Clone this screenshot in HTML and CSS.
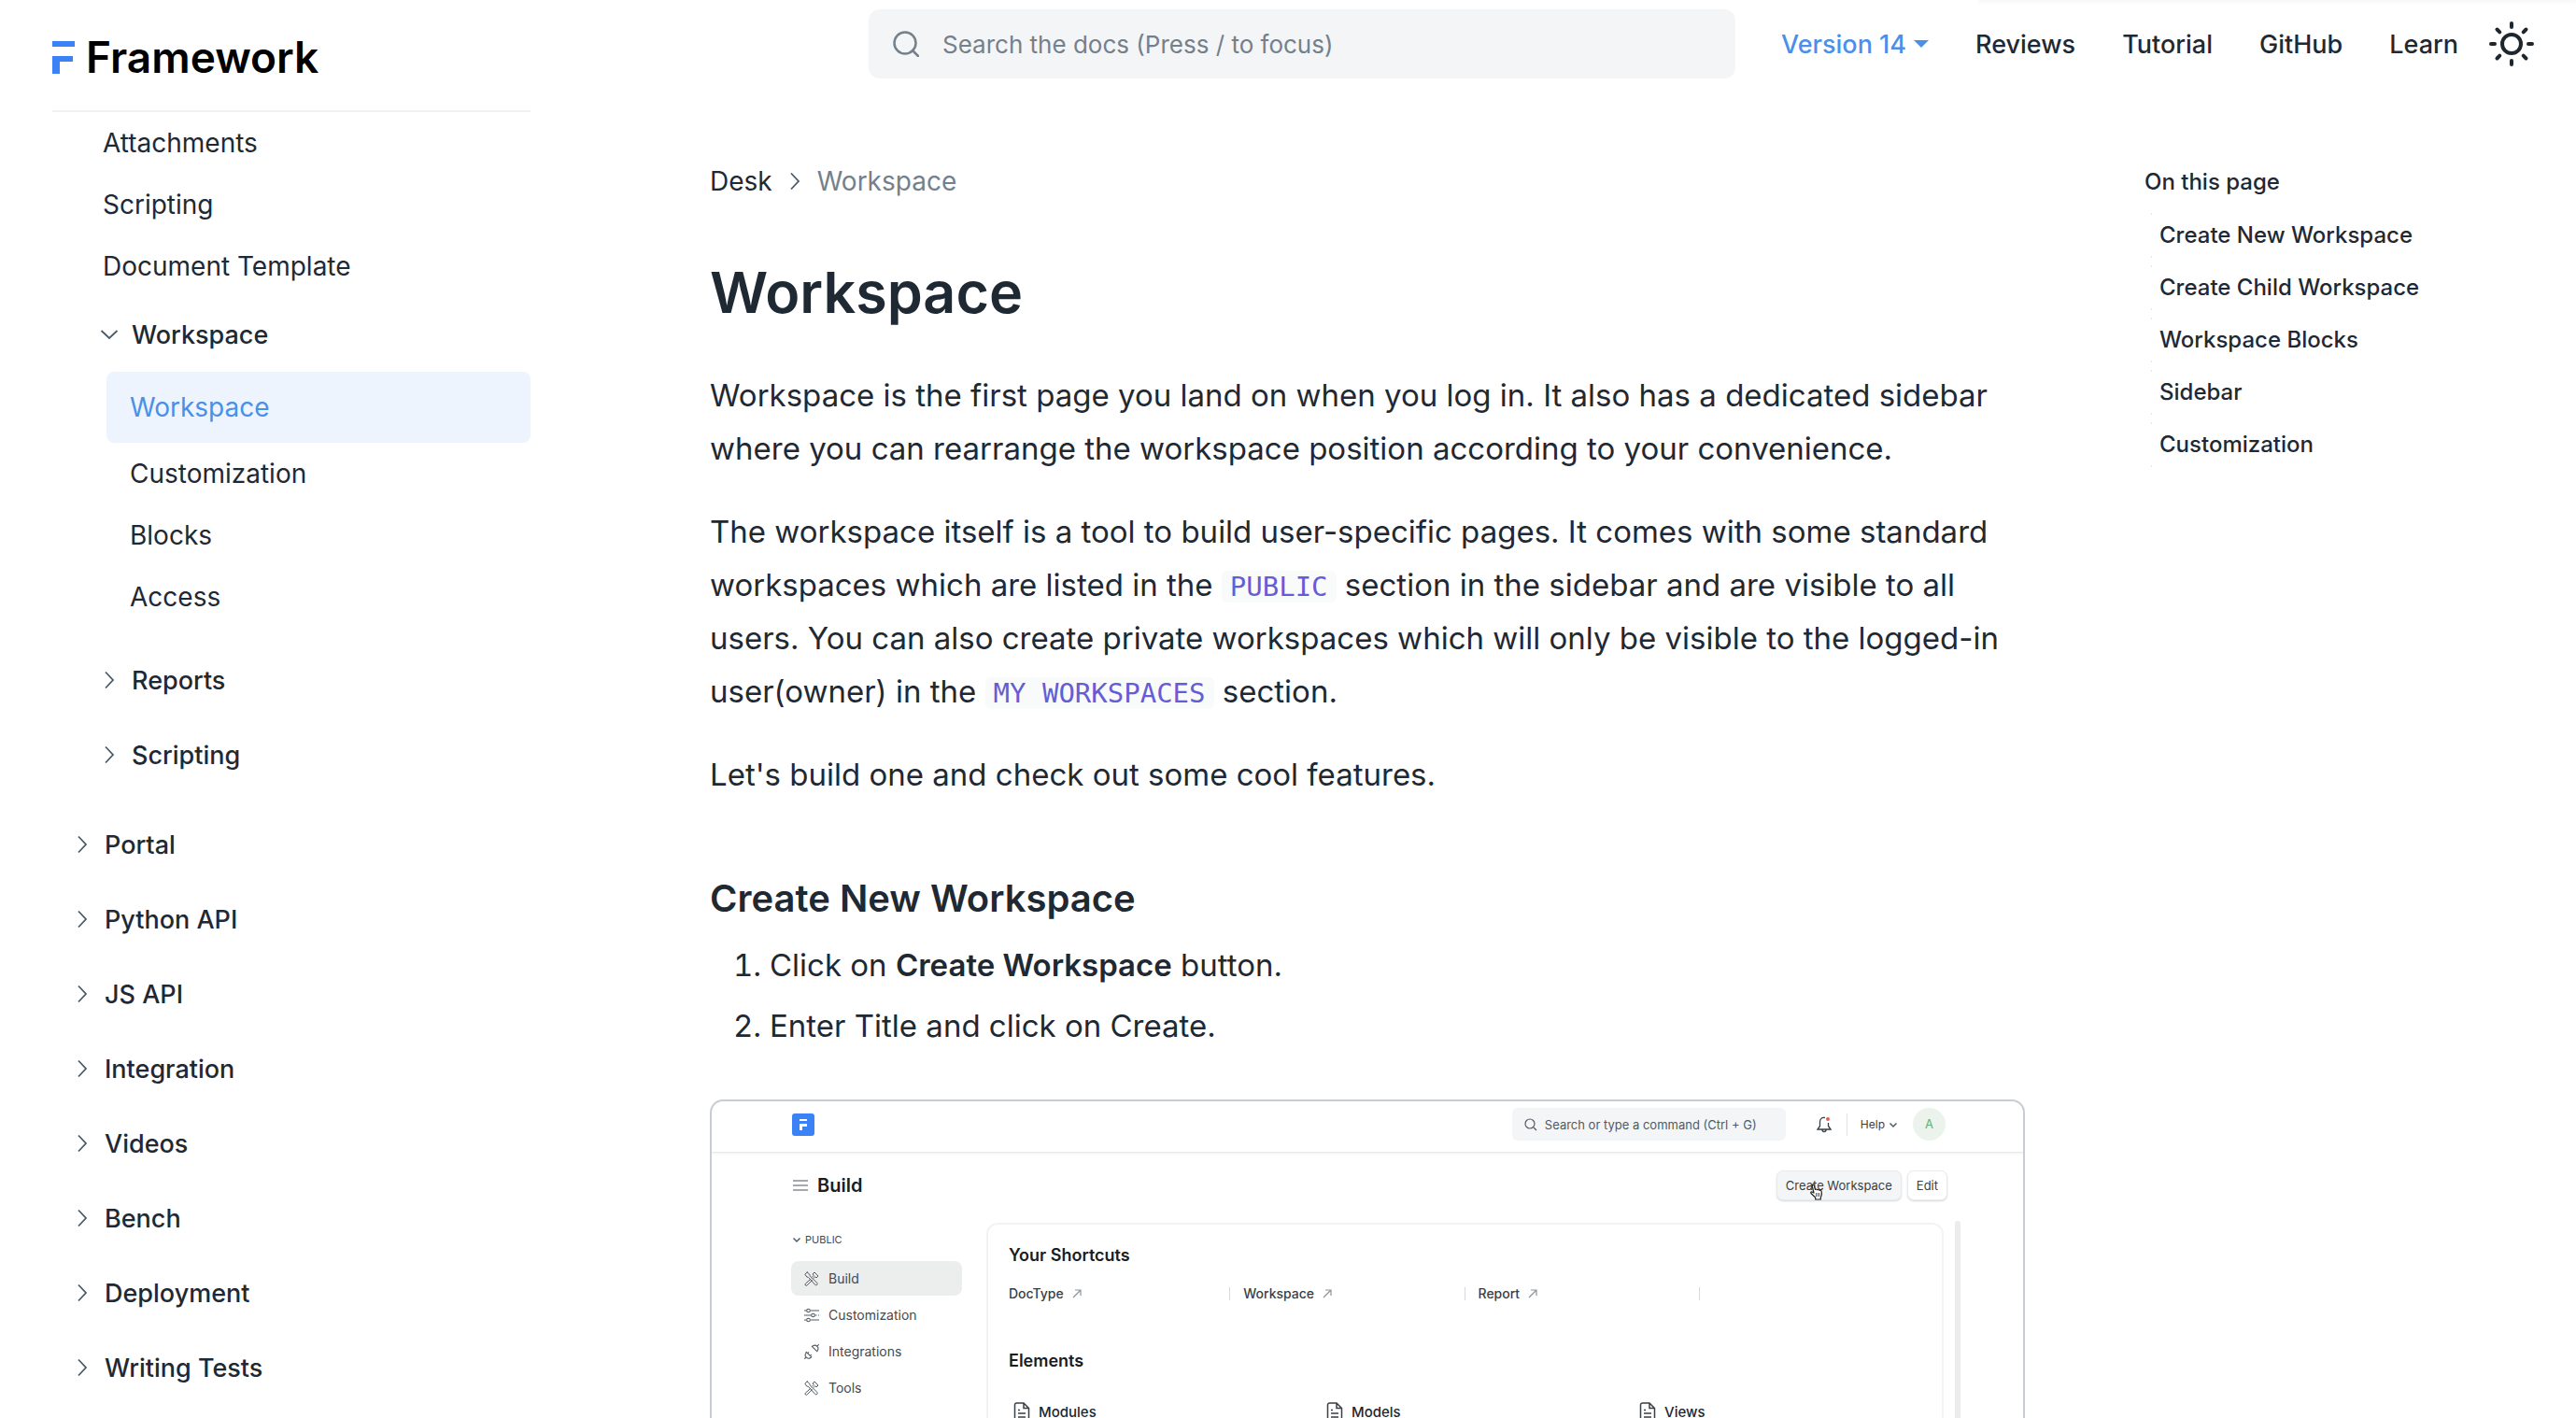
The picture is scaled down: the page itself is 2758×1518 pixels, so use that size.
FILE: index.html
```
<!DOCTYPE html>
<html lang="en">
<head>
<meta charset="utf-8">
<meta name="viewport" content="width=device-width, initial-scale=1">
<title>Workspace - Framework</title>
<link rel="stylesheet" href="styles.css">
</head>
<body>
<svg class="sprite" aria-hidden="true">
  <symbol id="chevron-right" viewBox="0 0 24 24"><path d="M8 3.500l8 8.500-8 8.500" fill="none" stroke="#4c5a67" stroke-width="1.800"/></symbol>
  <symbol id="chevron-down" viewBox="0 0 24 24"><path d="M3.500 8l8.500 8 8.500-8" fill="none" stroke="#4c5a67" stroke-width="1.800"/></symbol>
  <symbol id="small-down" viewBox="0 0 10 10"><path d="M1.500 3.500L5 7l3.500-3.500" fill="none" stroke="#525a61" stroke-width="1.500"/></symbol>
  <symbol id="tools" viewBox="0 0 16 16"><g fill="none" stroke="#525a61" stroke-width="1" stroke-linejoin="round" stroke-linecap="round"><path d="M3.200 1l2.600 2.200.3 1.600 7.800 7.600a1.500 1.500 0 0 1-2.100 2.100L4.500 6.400 2.800 6 .8 3.200 3.200 1z"/><path d="M8.700 6L10.300 4.400 9 3l2-2 4 4-2 2-1.300-1.300L10 7.300M7 8.200l-5.600 5a1.200 1.200 0 0 0 1.700 1.800L8.500 9.600"/></g></symbol>
  <symbol id="arrow-out" viewBox="0 0 10 10"><path d="M1 9l8-8M3 1h6v6" fill="none" stroke="#8d959c" stroke-width="1.200"/></symbol>
  <symbol id="file" viewBox="0 0 18 22"><path d="M1.500 3a2 2 0 0 1 2-2H11l5.500 5.500V19a2 2 0 0 1-2 2h-11a2 2 0 0 1-2-2zM11 1v5.500h5.500M5 8.500h2M5 12h8M5 16h8" fill="none" stroke="#383f45" stroke-width="1.500"/></symbol>
</svg>
<div class="page">
  <aside class="sidebar">
    <a class="brand" href="#">
      <svg class="brand-mark" viewBox="0 0 24 35" aria-hidden="true"><path d="M0 0h24v6H0zM0 16h22v6H8v13H0z" fill="#3b82f6"/></svg>
      <span>Framework</span>
    </a>
    <nav class="tree" aria-label="Documentation">
      <a class="leaf" href="#">Attachments</a>
      <a class="leaf" href="#">Scripting</a>
      <a class="leaf" href="#">Document Template</a>
      <button class="group nested" type="button" aria-expanded="true"><svg class="chevron"><use href="#chevron-down"/></svg>Workspace</button>
      <div class="subtree">
        <a class="leaf deep active" href="#">Workspace</a>
        <a class="leaf deep" href="#">Customization</a>
        <a class="leaf deep" href="#">Blocks</a>
        <a class="leaf deep" href="#">Access</a>
      </div>
      <div class="subtree">
        <button class="group nested" type="button"><svg class="chevron"><use href="#chevron-right"/></svg>Reports</button>
        <button class="group nested" type="button"><svg class="chevron"><use href="#chevron-right"/></svg>Scripting</button>
      </div>
      <button class="group" type="button"><svg class="chevron"><use href="#chevron-right"/></svg>Portal</button>
      <button class="group" type="button"><svg class="chevron"><use href="#chevron-right"/></svg>Python API</button>
      <button class="group" type="button"><svg class="chevron"><use href="#chevron-right"/></svg>JS API</button>
      <button class="group" type="button"><svg class="chevron"><use href="#chevron-right"/></svg>Integration</button>
      <button class="group" type="button"><svg class="chevron"><use href="#chevron-right"/></svg>Videos</button>
      <button class="group" type="button"><svg class="chevron"><use href="#chevron-right"/></svg>Bench</button>
      <button class="group" type="button"><svg class="chevron"><use href="#chevron-right"/></svg>Deployment</button>
      <button class="group" type="button"><svg class="chevron"><use href="#chevron-right"/></svg>Writing Tests</button>
    </nav>
  </aside>

  <header class="topbar">
    <label class="search">
      <svg class="search-icon" viewBox="0 0 28 28" aria-hidden="true"><circle cx="13" cy="13" r="11.500"/><path d="M21 21l6 6"/></svg>
      <input type="search" placeholder="Search the docs (Press / to focus)" aria-label="Search the docs">
    </label>
    <nav class="links" aria-label="Main">
      <button class="version" type="button">Version 14<svg class="caret" viewBox="0 0 16 8" aria-hidden="true"><path d="M0 0h16L8 8z"/></svg></button>
      <a href="#">Reviews</a>
      <a href="#">Tutorial</a>
      <a href="#">GitHub</a>
      <a href="#">Learn</a>
    </nav>
    <button class="theme" type="button" aria-label="Switch theme">
      <svg viewBox="0 0 48 48" fill="none" stroke="#1f272e" stroke-width="4" stroke-linecap="round"><circle cx="24" cy="24" r="10"/><path d="M24 2v4M24 42v4M2 24h4M42 24h4M8.500 8.500l2.800 2.800M36.700 36.700l2.800 2.800M8.500 39.500l2.800-2.800M36.700 11.300l2.800-2.800"/></svg>
    </button>
  </header>

  <main class="content">
    <nav class="breadcrumb" aria-label="Breadcrumb"><a href="#">Desk</a><svg class="chevron"><use href="#chevron-right"/></svg><span>Workspace</span></nav>
    <h1>Workspace</h1>
    <p>Workspace is the first page you land on when you log in. It also has a dedicated sidebar where you can rearrange the workspace position according to your convenience.</p>
    <p>The workspace itself is a tool to build user-specific pages. It comes with some standard workspaces which are listed in the <code>PUBLIC</code> section in the sidebar and are visible to all users. You can also create private workspaces which will only be visible to the logged-in user(owner) in the <code>MY WORKSPACES</code> section.</p>
    <p>Let's build one and check out some cool features.</p>
    <h2>Create New Workspace</h2>
    <ol>
      <li>Click on <strong>Create Workspace</strong> button.</li>
      <li>Enter Title and click on Create.</li>
    </ol>

    <figure class="demo">
      <div class="demo-nav">
        <svg class="demo-logo" viewBox="0 0 24 24" aria-hidden="true"><rect width="24" height="24" rx="3" fill="#3b82f6"/><path d="M8 6h8v2H8zM8 11h8v3h-5v4H8z" fill="#fff"/></svg>
        <label class="demo-search">
          <svg viewBox="0 0 14 14" aria-hidden="true"><circle cx="6" cy="6" r="5"/><path d="M10 10l3 3"/></svg>
          <input type="search" placeholder="Search or type a command (Ctrl + G)" aria-label="Search or type a command">
        </label>
        <svg class="demo-bell" viewBox="0 0 16 18" aria-hidden="true"><path d="M9 1.500C5.500.8 3.500 3 3.500 6v4.500L1 14h14l-2.500-3.500V7M6 14.500a2 2 0 0 0 4 0" fill="none" stroke="#383f45" stroke-width="1.300"/><circle cx="12" cy="3" r="2" fill="#e0605c"/></svg>
        <button class="demo-help" type="button">Help<svg><use href="#small-down"/></svg></button>
        <span class="demo-avatar">A</span>
      </div>
      <div class="demo-title">
        <svg viewBox="0 0 16 14" aria-hidden="true"><path d="M0 2h16M0 7h16M0 12h16" stroke="#a3a9ae" stroke-width="2"/></svg>
        <strong>Build</strong>
        <button class="demo-button pressed" type="button">Create Workspace<svg class="demo-cursor" viewBox="0 0 16 18" aria-hidden="true"><path d="M5 10L3.200 2.500c-.3-1.600 1.600-2 2-.6L6.500 6.500c.7-.8 1.900-.6 2.200.3.800-.6 1.800-.3 2.200.5.900-.4 2 0 2.200 1 .8 3.200.4 4.700-.8 6.700v2H6.700v-2L2 10.500c-.8-1.300.8-2.200 1.600-1.300z" fill="#fff" stroke="#222" stroke-width="1.200" stroke-linejoin="round"/><path d="M7.500 10v4M9.300 10v4M11 10v4" stroke="#222" stroke-width=".7"/></svg></button>
        <button class="demo-button" type="button">Edit</button>
      </div>
      <div class="demo-body">
        <nav class="demo-side" aria-label="Workspaces">
          <div class="demo-section"><svg><use href="#small-down"/></svg>PUBLIC</div>
          <a class="selected" href="#"><svg><use href="#tools"/></svg>Build</a>
          <a href="#"><svg viewBox="0 0 16 16"><g fill="none" stroke="#525a61" stroke-width="1.100"><path d="M0 3h2.500M7 3h9M0 8h7.500M11.500 8h2M15 8h1M0 13h2.500M7 13h9"/><circle cx="4.500" cy="3" r="1.800"/><circle cx="9.500" cy="8" r="1.800"/><circle cx="4.500" cy="13" r="1.800"/></g></svg>Customization</a>
          <a href="#"><svg viewBox="0 0 16 16"><g fill="none" stroke="#525a61" stroke-width="1.100" stroke-linejoin="round"><path d="M2.300 8.300l5.400 5.400-1 .8c-1.300 1-3.200.8-4.400-.3s-1.400-3.200-.5-4.500zM.3 15.700l1.800-1.700M3.800 9.600L5 8.400M6.500 12.300l1.200-1.200M8.300 2.300l5.400 5.400.6-1c1-1.500.7-3.300-.4-4.400s-3-1.500-4.400-.5zM13.900 2.100L15.700.3"/></g></svg>Integrations</a>
          <a href="#"><svg><use href="#tools"/></svg>Tools</a>
        </nav>
        <section class="demo-card">
          <h3>Your Shortcuts</h3>
          <div class="demo-shortcuts">
            <a href="#">DocType<svg><use href="#arrow-out"/></svg></a>
            <a href="#">Workspace<svg><use href="#arrow-out"/></svg></a>
            <a href="#">Report<svg><use href="#arrow-out"/></svg></a>
          </div>
          <h3>Elements</h3>
          <div class="demo-elements">
            <a href="#"><svg><use href="#file"/></svg>Modules</a>
            <a href="#"><svg><use href="#file"/></svg>Models</a>
            <a href="#"><svg><use href="#file"/></svg>Views</a>
          </div>
        </section>
        <div class="demo-scroll"></div>
      </div>
    </figure>
  </main>

  <nav class="toc" aria-label="On this page">
    <div class="toc-title">On this page</div>
    <a href="#">Create New Workspace</a>
    <a href="#">Create Child Workspace</a>
    <a href="#">Workspace Blocks</a>
    <a href="#">Sidebar</a>
    <a href="#">Customization</a>
  </nav>
</div>
</body>
</html>
```
FILE: styles.css
```
* { box-sizing: border-box; }

body {
  margin: 0;
  background: #fff;
  color: #1f2933;
  font-family: Inter, "Liberation Sans", sans-serif;
}

a { color: inherit; text-decoration: none; }

button {
  margin: 0;
  padding: 0;
  border: 0;
  background: none;
  color: inherit;
  font: inherit;
  cursor: pointer;
}

input {
  flex: 1;
  min-width: 0;
  padding: 0;
  border: 0;
  outline: 0;
  background: none;
  color: inherit;
  font: inherit;
}

svg { display: block; flex: none; }

.sprite { position: absolute; width: 0; height: 0; }

.page {
  display: grid;
  grid-template-columns: 568px minmax(0, 1fr) 462px;
  grid-template-rows: auto minmax(0, 1fr);
  height: 100vh;
  overflow: hidden;
}

/* Sidebar */

.sidebar { grid-row: 1 / 3; padding-left: 56px; }

.brand {
  display: flex;
  align-items: center;
  gap: 12px;
  height: 120px;
  padding-top: 4px;
  border-bottom: 2px solid #f0f1f2;
  color: #000;
  font-size: 46px;
  font-weight: 600;
}

.brand-mark { width: 24px; height: 35px; }

.tree { display: flex; flex-direction: column; }

.leaf {
  display: block;
  padding-left: 54px;
  font-size: 28px;
  line-height: 66px;
}

.leaf.deep { padding-left: 83px; }

.leaf.deep.active {
  margin-left: 58px;
  padding-left: 25px;
  border-radius: 8px;
  background: #edf4fd;
  color: #4a90e9;
  line-height: 76px;
}

.group {
  display: flex;
  align-items: center;
  gap: 12px;
  height: 80px;
  padding-left: 20px;
  font-size: 27px;
  font-weight: 500;
}

.group.nested { padding-left: 49px; }

.subtree { margin-bottom: 16px; }

.chevron { width: 24px; height: 24px; }

/* Top bar */

.topbar {
  grid-column: 2 / 4;
  display: flex;
  align-items: center;
  padding: 10px 45px 10px 362px;
  background: linear-gradient(#f8f8f8, #fff) right top / 640px 6px no-repeat;
}

.search {
  flex: 1;
  display: flex;
  align-items: center;
  gap: 25px;
  height: 74px;
  padding: 0 26px;
  border-radius: 12px;
  background: #f4f5f6;
  font-size: 26px;
}

.search-icon {
  width: 28px;
  height: 28px;
  fill: none;
  stroke: #74808b;
  stroke-width: 2.5;
  stroke-linecap: round;
}

.search input::placeholder { color: #74808b; opacity: 1; }

.links {
  display: flex;
  align-items: center;
  gap: 50px;
  margin-left: 49px;
  font-size: 27px;
  font-weight: 500;
}

.version { display: flex; align-items: center; gap: 8px; color: #4a90e9; }

.caret { width: 16px; height: 8px; fill: #4a90e9; }

.theme { margin-left: 33px; }

.theme svg { width: 48px; height: 48px; }

/* Article */

.content { padding: 80px 128px 0 192px; font-size: 33px; line-height: 57px; }

.breadcrumb {
  display: flex;
  align-items: center;
  gap: 12px;
  font-size: 28px;
  line-height: 40px;
}

.breadcrumb span { color: #74808b; }

h1 {
  margin: 62px 0 45px;
  font-size: 61px;
  font-weight: 600;
  line-height: 74px;
}

p { margin: 0 0 32px; }

code {
  padding: 0 9px;
  border-radius: 6px;
  background: #f9fafa;
  color: #655dd4;
  font-family: "DejaVu Sans Mono", monospace;
  font-size: 29px;
  line-height: 34px;
}

h2 {
  margin: 79px 0 18px;
  font-size: 40px;
  font-weight: 600;
  line-height: 50px;
}

ol {
  display: grid;
  gap: 8px;
  margin: 0 0 50px;
  padding-left: 64px;
}

strong { font-weight: 600; }

/* Table of contents */

.toc {
  padding-top: 80px;
  font-size: 24px;
  font-weight: 500;
}

.toc-title { margin-bottom: 12px; line-height: 42px; }

.toc a {
  display: block;
  margin: 0 0 8px 7px;
  padding-left: 9px;
  background:
    linear-gradient(#e2e6e9, #e2e6e9) left top / 1px 2px no-repeat,
    linear-gradient(#e2e6e9, #e2e6e9) left bottom / 1px 2px no-repeat;
  line-height: 48px;
}

/* Product demo inside the article */

.demo {
  height: 800px;
  margin: 0;
  overflow: hidden;
  border: 2px solid #c8cdd4;
  border-radius: 14px;
  color: #383f45;
  font-size: 13px;
  line-height: 20px;
}

.demo-nav {
  display: flex;
  align-items: center;
  padding: 7px 83px 12px 86px;
  border-bottom: 1px solid #e6e9e9;
  box-shadow: 0 1px 3px #eef1f1;
}

.demo-logo { width: 24px; height: 24px; margin-right: auto; }

.demo-search {
  display: flex;
  align-items: center;
  gap: 8px;
  width: 293px;
  height: 35px;
  padding: 0 13px;
  border-radius: 6px;
  background: #f4f5f6;
}

.demo-search svg {
  width: 14px;
  height: 14px;
  fill: none;
  stroke: #525a61;
  stroke-width: 1.2;
}

.demo-search input::placeholder { color: #525a61; opacity: 1; }

.demo-bell { width: 16px; height: 18px; margin: 0 16px 0 33px; }

.demo-help {
  display: flex;
  align-items: center;
  gap: 4px;
  height: 24px;
  padding: 0 16px 0 14px;
  border-left: 1px solid #e2e5e8;
  font-size: 12px;
}

.demo-help svg { width: 10px; height: 10px; }

.demo-avatar {
  width: 35px;
  height: 35px;
  border-radius: 50%;
  background: #ebf3ec;
  color: #5eb073;
  line-height: 35px;
  text-align: center;
}

.demo-title {
  display: flex;
  align-items: center;
  padding: 19px 81px 0 87px;
}

.demo-title > svg { width: 16px; height: 14px; }

.demo-title strong {
  margin: 0 auto 0 10px;
  color: #1a1d21;
  font-size: 20px;
}

.demo-button {
  position: relative;
  height: 32px;
  margin-left: 6px;
  padding: 0 9px;
  border: 1px solid #e8ebec;
  border-radius: 7px;
  background: #fff;
  box-shadow: 0 1px 2px #d5d9dc;
}

.demo-button.pressed { background: #f4f5f6; }

.demo-cursor {
  position: absolute;
  top: 13px;
  left: 34px;
  width: 16px;
  height: 18px;
}

.demo-body {
  display: flex;
  gap: 12px;
  height: 600px;
  padding: 22px 67px 0 85px;
}

.demo-side {
  width: 183px;
  margin-right: 14px;
  color: #434a51;
  font-size: 14px;
}

.demo-section {
  display: flex;
  align-items: center;
  gap: 4px;
  margin-bottom: 3px;
  padding-left: 1px;
  font-size: 11px;
  line-height: 40px;
}

.demo-section svg { width: 10px; height: 10px; }

.demo-side a {
  display: flex;
  align-items: center;
  gap: 10px;
  height: 37px;
  margin-bottom: 2px;
  padding-left: 14px;
  border-radius: 8px;
}

.demo-side a svg { width: 16px; height: 16px; }

.demo-side .selected { background: #ebeeed; }

.demo-card {
  flex: 1;
  margin-top: 2px;
  padding: 21px 8px 0 8px;
  border: 2px solid #f2f4f4;
  border-radius: 12px;
}

.demo-card h3 {
  margin: 0;
  padding-left: 14px;
  color: #1a1d21;
  font-size: 18px;
  font-weight: 600;
  line-height: 24px;
}

.demo-shortcuts {
  display: grid;
  grid-template-columns: repeat(4, 1fr);
  margin: 22px 0 53px;
  font-size: 14px;
  font-weight: 500;
}

.demo-shortcuts a {
  display: flex;
  align-items: center;
  gap: 9px;
  padding-left: 14px;
  border-right: 1px solid #d5d9dc;
  line-height: 14px;
}

.demo-shortcuts svg { width: 10px; height: 10px; }

.demo-elements {
  display: grid;
  grid-template-columns: repeat(3, 1fr);
  margin-top: 31px;
  color: #1f272e;
  font-size: 15px;
  font-weight: 500;
}

.demo-elements a {
  display: flex;
  align-items: center;
  gap: 9px;
  padding-left: 19px;
  line-height: 24px;
}

.demo-elements svg { width: 18px; height: 22px; }

.demo-scroll { width: 6px; border-radius: 3px 3px 0 0; background: #ebeded; }
```
